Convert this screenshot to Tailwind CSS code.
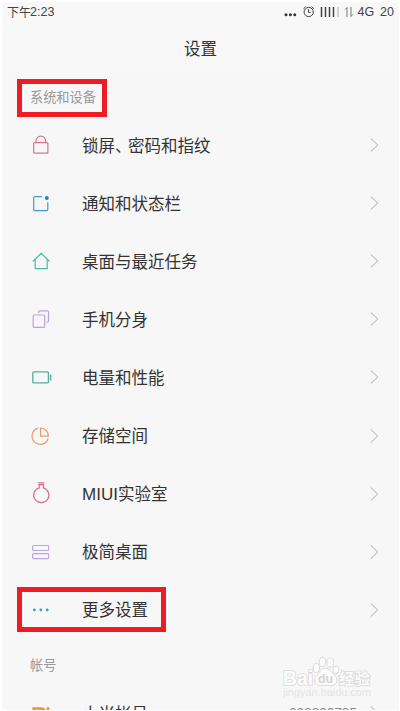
<!DOCTYPE html>
<html lang="zh-CN">
<head>
<meta charset="utf-8">
<title>设置</title>
<script src="https://cdn.jsdelivr.net/npm/@tailwindcss/browser@4"></script>
</head>
<body class="h-[711px] w-[400px] overflow-hidden bg-white font-['Noto_Sans_CJK_SC',sans-serif] text-[#333]">
<div class="relative h-[711px] w-[400px] overflow-hidden pl-[2px] pt-[2px] pr-px pb-px">
<div class="h-[708px] overflow-hidden bg-[#f7f7f7]">
  <header class="h-[70px] bg-[#f8f8f8]">
    <div class="flex h-[20px] items-center justify-between pl-[5px] pr-[5px] text-[12px] leading-[20px] text-[#444]">
      <span class="flex">下午<span class="-ml-px font-['Liberation_Sans',sans-serif] text-[12.5px]">2:23</span></span>
      <div class="flex items-center font-['Liberation_Sans',sans-serif] text-[12.5px]">
        <svg class="h-[20px] w-[74px]" viewBox="282 2 74 20" fill="none" stroke="#444">
          <g fill="#333" stroke="none"><circle cx="286" cy="14.7" r="1.5"/><circle cx="290.4" cy="14.7" r="1.5"/><circle cx="294.8" cy="14.7" r="1.5"/></g>
          <circle cx="308.7" cy="12" r="4.6"/><path d="M308.5 9.3v3h2.2M303.5 8.8l2.3-2.2M313.9 8.8l-2.3-2.2"/>
          <path d="M321.5 7v10M325.5 7v10M329.5 7v10M333.5 7v10" stroke-width="1.5"/><path d="M338 7v10" stroke="#aaa"/>
          <path d="M345 9.5l2-2v9.5M351 7v9.5l2-2.2" stroke="#777"/>
        </svg>
        <span class="ml-[2px] w-[22.5px]">4G</span><span class="text-right">20</span>
      </div>
    </div>
    <h1 class="mt-[14px] text-center text-[16.5px] leading-[24px]">设置</h1>
  </header>
  <div class="flex h-[44px] items-center pl-[28px] pt-[6px] text-[13.2px] text-[#999]">系统和设备</div>
  <main>
    <div class="flex h-[58.1px] items-center pl-[28px] pr-[20px]"><svg class="mr-[28px] h-6 w-6 shrink-0" viewBox="0 0 24 24" fill="none" stroke="#d9758b" stroke-width="1.2"><rect x="3.7" y="9.6" width="14.2" height="10.6" rx="1"/><path d="M6 9.5V8a4.8 4.8 0 0 1 9.6 0v1.5"/></svg><span class="grow text-[16.5px]">锁屏<span class="tracking-[-3.5px]">、</span>密码和指纹</span><svg class="h-4 w-[9px]" viewBox="0 0 9 16" fill="none" stroke="#aaa"><path d="M.8 1.5l7 6.5-7 6.5"/></svg></div>
    <div class="flex h-[58.1px] items-center pl-[28px] pr-[20px]"><svg class="mr-[28px] h-6 w-6 shrink-0" viewBox="0 0 24 24" fill="none" stroke="#3d9dcc" stroke-width="1.2"><path d="M12.2 5.6H4.7q-1 0-1 1v12q0 1 1 1h12.1q1 0 1-1v-7.4"/><circle cx="16.8" cy="7" r="2" fill="#1688c9" stroke="none"/></svg><span class="grow text-[16.5px]">通知和状态栏</span><svg class="h-4 w-[9px]" viewBox="0 0 9 16" fill="none" stroke="#aaa"><path d="M.8 1.5l7 6.5-7 6.5"/></svg></div>
    <div class="flex h-[58.1px] items-center pl-[28px] pr-[20px]"><svg class="mr-[28px] h-6 w-6 shrink-0" viewBox="0 0 24 24" fill="none" stroke="#4dbca5" stroke-width="1.2"><path d="M2.8 12.5l8.4-8.2 8.4 8.2M5.2 10.5v9.1h12v-9.1"/></svg><span class="grow text-[16.5px]">桌面与最近任务</span><svg class="h-4 w-[9px]" viewBox="0 0 9 16" fill="none" stroke="#aaa"><path d="M.8 1.5l7 6.5-7 6.5"/></svg></div>
    <div class="flex h-[58.1px] items-center pl-[28px] pr-[20px]"><svg class="mr-[28px] h-6 w-6 shrink-0" viewBox="0 0 24 24" fill="none" stroke="#b9a3dc" stroke-width="1.2"><rect x="3.2" y="8" width="11.5" height="12.4" rx="1"/><path d="M8.5 6V4.9q0-1 1-1h8q1 0 1 1v9.2q0 1-1 1h-1.1"/></svg><span class="grow text-[16.5px]">手机分身</span><svg class="h-4 w-[9px]" viewBox="0 0 9 16" fill="none" stroke="#aaa"><path d="M.8 1.5l7 6.5-7 6.5"/></svg></div>
    <div class="flex h-[58.1px] items-center pl-[28px] pr-[20px]"><svg class="mr-[28px] h-6 w-6 shrink-0" viewBox="0 0 24 24" fill="none" stroke="#55ad9c" stroke-width="1.3"><rect x="2.8" y="6.9" width="15.6" height="11" rx="1"/><path d="M20.7 9.4v6"/></svg><span class="grow text-[16.5px]">电量和性能</span><svg class="h-4 w-[9px]" viewBox="0 0 9 16" fill="none" stroke="#aaa"><path d="M.8 1.5l7 6.5-7 6.5"/></svg></div>
    <div class="flex h-[58.1px] items-center pl-[28px] pr-[20px]"><svg class="mr-[28px] h-6 w-6 shrink-0" viewBox="0 0 24 24" fill="none" stroke="#e99a6e" stroke-width="1.2"><path d="M8.3 4.2a8.2 8.2 0 1 0 9.8 10.3M10.6 4v8.2h7.8A8 8 0 0 0 10.6 4z"/></svg><span class="grow text-[16.5px]">存储空间</span><svg class="h-4 w-[9px]" viewBox="0 0 9 16" fill="none" stroke="#aaa"><path d="M.8 1.5l7 6.5-7 6.5"/></svg></div>
    <div class="flex h-[58.1px] items-center pl-[28px] pr-[20px]"><svg class="mr-[28px] h-6 w-6 shrink-0" viewBox="0 0 24 24" fill="none" stroke="#dd6e86" stroke-width="1.2"><path d="M8.3.8h6M8.3 2.7h6M9.2 3v2.8a7.6 7.6 0 1 0 4.2 0V3"/></svg><span class="flex grow items-baseline pt-px text-[16.5px]"><span class="w-[36px] font-['Liberation_Sans',sans-serif] text-[17px]">MIUI</span>实验室</span><svg class="h-4 w-[9px]" viewBox="0 0 9 16" fill="none" stroke="#aaa"><path d="M.8 1.5l7 6.5-7 6.5"/></svg></div>
    <div class="flex h-[58.1px] items-center pl-[28px] pr-[20px]"><svg class="mr-[28px] h-6 w-6 shrink-0" viewBox="0 0 24 24" fill="none" stroke="#bda5e2" stroke-width="1.2"><rect x="2.6" y="5.5" width="16" height="5" rx="1"/><rect x="2.6" y="13.6" width="16" height="5" rx="1"/></svg><span class="grow text-[16.5px]">极简桌面</span><svg class="h-4 w-[9px]" viewBox="0 0 9 16" fill="none" stroke="#aaa"><path d="M.8 1.5l7 6.5-7 6.5"/></svg></div>
    <div class="flex h-[58.1px] items-center pl-[28px] pr-[20px]"><svg class="mr-[28px] h-6 w-6 shrink-0" viewBox="0 0 24 24" fill="#2d9fd8"><circle cx="4.4" cy="11.9" r="1.4"/><circle cx="10.8" cy="11.9" r="1.4"/><circle cx="17.2" cy="11.9" r="1.4"/></svg><span class="grow text-[16.5px]">更多设置</span><svg class="h-4 w-[9px]" viewBox="0 0 9 16" fill="none" stroke="#aaa"><path d="M.8 1.5l7 6.5-7 6.5"/></svg></div>
  </main>
  <div class="flex h-[45px] items-center pl-[28px] pt-[7px] text-[13.2px] text-[#999]">帐号</div>
  <div class="flex h-[58.1px] items-center pl-[28px] pr-[20px]"><svg class="mr-[28px] h-6 w-6 shrink-0" viewBox="0 0 24 24" fill="none" stroke="#ff8a1f" stroke-width="2.6"><path d="M3.7 19V7.500h7.5q3 0 3 3V19M9 11.500v8M18 6.200V19"/></svg><span class="grow pt-px text-[16.5px]">小米帐号</span><span class="mr-[13px] font-['Liberation_Sans',sans-serif] text-[13.6px] text-[#888]">602800735</span><svg class="h-4 w-[9px]" viewBox="0 0 9 16" fill="none" stroke="#aaa"><path d="M.8 1.5l7 6.5-7 6.5"/></svg></div>
</div>
<div class="absolute left-[17px] top-[79px] h-[38px] w-[90px] border-[5px] border-[#ed1c24]"></div>
<div class="absolute left-[17px] top-[587px] h-[45px] w-[149px] border-[5px] border-[#ed1c24]"></div>
<svg class="absolute left-[280px] top-[654px] h-[48px] w-[94px]" viewBox="280 654 94 48" fill="#fcfcfc" stroke="#dadada" stroke-width="1">
  <ellipse cx="316.3" cy="668" rx="3.2" ry="4.5"/><ellipse cx="322.5" cy="662" rx="3.3" ry="4.6"/><ellipse cx="330.2" cy="662.500" rx="3.3" ry="4.6"/><ellipse cx="336" cy="670" rx="3.1" ry="4"/>
  <path d="M325.500 668c4 0 5.500 4 9.300 7.300 5 5 .5 11.500-5 10.300-2.500-.600-5.500-.600-8 0-5.500 1.200-10-5.300-5-10.300 3.500-3.300 4.700-7.300 8.700-7.300z"/>
  <g paint-order="stroke" stroke-width="1.7" font-weight="bold">
    <text x="283" y="685" font-family="Liberation Sans" font-size="20" textLength="30" lengthAdjust="spacingAndGlyphs">Bai</text>
    <text x="318" y="683" font-family="Liberation Sans" font-size="13.500" textLength="15" lengthAdjust="spacingAndGlyphs" fill="#d2d2d2" stroke="none">du</text>
    <text x="339" y="683.500" font-family="Noto Sans CJK SC" font-size="15" textLength="31" lengthAdjust="spacingAndGlyphs">经验</text>
  </g>
  <text x="283" y="696" font-family="Liberation Sans" font-size="10.500" textLength="88" lengthAdjust="spacingAndGlyphs" fill="#e3e3e3" stroke="none">jingyan.baidu.com</text>
</svg>
</div>
</body>
</html>
